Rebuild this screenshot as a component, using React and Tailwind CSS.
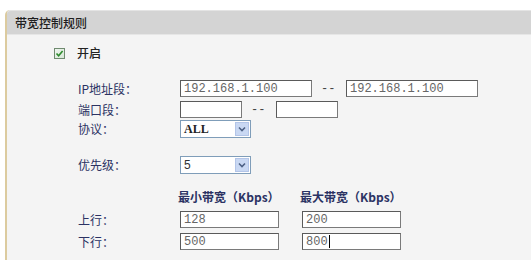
import React from "react";

const cjk = { fontFamily: '"Noto Sans CJK SC", "Noto Sans", sans-serif' };

function Input({ w, value, caret }) {
  return (
    <div
      className={`h-[17px] ${w} border border-[#7a7a7a] border-t-[#5a5a5a] border-l-[#5a5a5a] bg-white flex items-center pl-[3px] text-[12px] text-[#666] leading-none`}
      style={{ fontFamily: '"Liberation Mono", monospace' }}
    >
      {value}
      {caret && <span className="w-px h-[13px] bg-black ml-[1px]" />}
    </div>
  );
}

function Select({ value, serif }) {
  return (
    <div className="h-[18px] w-[71px] border border-[#7f9db9] bg-white flex items-center justify-between">
      <span
        className={`pl-[3px] text-[12px] leading-none ${serif ? "font-bold text-[#222]" : "text-[#333]"}`}
        style={{ fontFamily: serif ? '"Liberation Serif", serif' : '"Liberation Sans", sans-serif' }}
      >
        {value}
      </span>
      <div className="w-[14px] h-[14px] mr-[1px] bg-[#c9d8f3] border border-[#b3c5e8] flex items-center justify-center">
        <svg width="8" height="6" viewBox="0 0 8 6">
          <path d="M1 1.5 L4 4.5 L7 1.5" stroke="#4d6185" strokeWidth="1.6" fill="none" />
        </svg>
      </div>
    </div>
  );
}

function Label({ children }) {
  return (
    <div className="w-[102px] shrink-0 text-[12px] leading-none text-[#2b3263]" style={cjk}>
      {children}
    </div>
  );
}

export default function App() {
  return (
    <div className="w-[531px] h-[260px] bg-white overflow-hidden pt-[10px] pl-[5px]">
      <div className="h-[250px] border-l-2 border-[#dccb9f] rounded-tl-[5px] bg-[#f4f4f4]">
        <div className="h-[25px] bg-[#d4d4d4] border-t border-[#e4e4e4] border-b border-b-[#e6e6e6] rounded-tl-[4px] flex items-center pl-[8px] text-[12px] text-[#1e1e1e] font-medium" style={cjk}>
          带宽控制规则
        </div>
        <div className="flex flex-col pl-[47px]">
          <div className="flex items-center mt-[11px] h-[14px]">
            <div className="w-[11px] h-[11px] border border-[#6f8a6f] bg-gradient-to-br from-[#eef5ee] to-[#d6e6d6] flex items-center justify-center">
              <svg width="9" height="9" viewBox="0 0 9 9">
                <path d="M1.5 4.5 L3.6 6.8 L7.6 2" stroke="#2c8a2c" strokeWidth="1.6" fill="none" />
              </svg>
            </div>
            <span className="ml-[12px] text-[12px] leading-none text-[#222] font-medium" style={cjk}>开启</span>
          </div>
          <div className="pl-[24px] flex flex-col">
            <div className="flex items-center mt-[20px] h-[17px]">
              <Label>IP地址段：</Label>
              <Input w="w-[132px]" value="192.168.1.100" />
              <span className="ml-[9px] w-[25px] text-[12px] text-[#444]" style={{ fontFamily: '"Liberation Mono", monospace' }}>--</span>
              <Input w="w-[132px]" value="192.168.1.100" />
            </div>
            <div className="flex items-center mt-[4px] h-[17px]">
              <Label>端口段：</Label>
              <Input w="w-[62px]" value="" />
              <span className="ml-[9px] w-[25px] text-[12px] text-[#444]" style={{ fontFamily: '"Liberation Mono", monospace' }}>--</span>
              <Input w="w-[62px]" value="" />
            </div>
            <div className="flex items-center mt-[2px] h-[18px]">
              <Label>协议：</Label>
              <Select value="ALL" serif />
            </div>
            <div className="flex items-center mt-[18px] h-[18px]">
              <Label>优先级：</Label>
              <Select value="5" />
            </div>
            <div className="flex items-center mt-[16px] h-[14px] text-[12px] leading-none text-[#2b3263] font-bold" style={cjk}>
              <div className="w-[100px]" />
              <div className="w-[122px]">最小带宽（Kbps）</div>
              <div>最大带宽（Kbps）</div>
            </div>
            <div className="flex items-center mt-[7px] h-[17px]">
              <Label>上行：</Label>
              <Input w="w-[99px]" value="128" />
              <div className="w-[23px]" />
              <Input w="w-[99px]" value="200" />
            </div>
            <div className="flex items-center mt-[5px] h-[17px]">
              <Label>下行：</Label>
              <Input w="w-[99px]" value="500" />
              <div className="w-[23px]" />
              <Input w="w-[99px]" value="800" caret />
            </div>
          </div>
        </div>
      </div>
    </div>
  );
}
